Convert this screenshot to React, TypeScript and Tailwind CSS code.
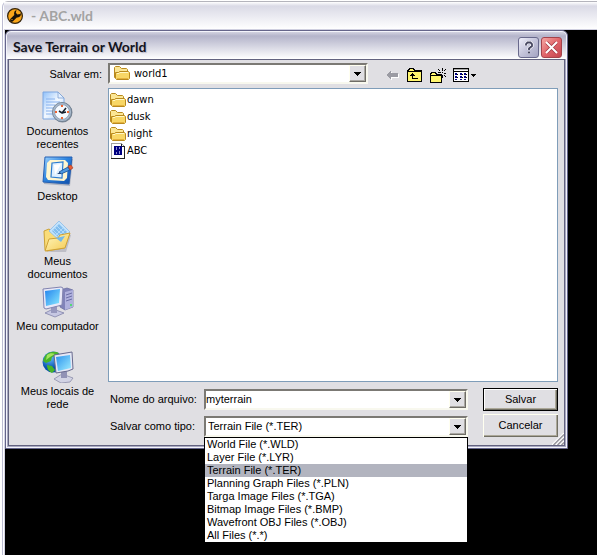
import { useState } from "react";
import type { ReactNode } from "react";

const FILE_TYPES = [
  "World File (*.WLD)",
  "Layer File (*.LYR)",
  "Terrain File (*.TER)",
  "Planning Graph Files (*.PLN)",
  "Targa Image Files (*.TGA)",
  "Bitmap Image Files (*.BMP)",
  "Wavefront OBJ Files (*.OBJ)",
  "All Files (*.*)",
];

const RecentIcon = () => (
  <svg viewBox="0 0 32 32" className="size-8">
    <defs>
      <linearGradient id="page" x1="0" y1="0" x2="1" y2="1">
        <stop offset="0" stopColor="#8fc0fa" />
        <stop offset=".5" stopColor="#f4f9ff" />
        <stop offset="1" stopColor="#a4caf6" />
      </linearGradient>
    </defs>
    <path d="M1 1h15l6 6v21H1z" fill="url(#page)" stroke="#7da6e0" />
    <path d="M16 1v6h6z" fill="#e4f0ff" stroke="#7c9fd2" strokeWidth=".8" />
    <path d="M4 8h9M4 11h14M4 14h9M4 17h7M4 20h6M4 23h7" stroke="#86b1ee" />
    <circle cx="20.5" cy="21.5" r="10" fill="#7e8795" />
    <circle cx="20" cy="21" r="9.6" fill="#a9b9cc" stroke="#6b7c8e" strokeWidth=".8" />
    <circle cx="20" cy="21" r="7.4" fill="#f5faff" stroke="#8394a9" strokeWidth=".8" />
    <path d="M20 14v2M20 26v2M13 21h2M25 21h2" stroke="#ee6432" strokeWidth="2" />
    <path d="M17 20l3 2 4-5M20 22l4-1" stroke="#16202d" strokeWidth="1.6" fill="none" />
  </svg>
);

const DesktopIcon = () => (
  <svg viewBox="0 0 32 32" className="size-8">
    <defs>
      <linearGradient id="desk" x1="0" y1="0" x2="1" y2="1">
        <stop offset="0" stopColor="#9dd3ff" />
        <stop offset=".45" stopColor="#2c83df" />
        <stop offset="1" stopColor="#0e4da9" />
      </linearGradient>
    </defs>
    <path d="M3 3l28 0-3 27-26-2z" fill="#7a88a0" opacity=".5" />
    <path d="M3 1h27l-3 27-26-2z" fill="url(#desk)" stroke="#245fb2" />
    <path d="M8 4h15l3 3-1 15-3 3-16-1-2-3 1-14z" fill="#fff6cf" />
    <path d="M10 7l11-1-1 16-11-1z" fill="#dcefff" stroke="#2a7bd0" strokeWidth="1.2" />
    <path d="M12 9l7-1-6 11z" fill="#fff" />
    <path d="M17 16l9-5 2 3-9 4z" fill="#4b98e1" stroke="#164c91" strokeWidth=".8" />
    <path d="M26 10l3-1 2 3-3 2z" fill="#e75c32" stroke="#a43720" strokeWidth=".6" />
    <path d="M15 18l3-2 1 2z" fill="#234677" />
  </svg>
);

const DocumentsIcon = () => (
  <svg viewBox="0 0 32 32" className="size-8">
    <defs>
      <linearGradient id="docs" x1="0" y1="0" x2="1" y2="1">
        <stop offset="0" stopColor="#fff9c4" />
        <stop offset="1" stopColor="#f5c94e" />
      </linearGradient>
    </defs>
    <path d="M5 31l19 0 5-17-2-1-6 14z" fill="#8d8d9a" opacity=".4" />
    <path d="M2 10l5-2 4 3 14 0 2 3-5 13-17 3-2-1z" fill="#f9dc78" stroke="#cba236" />
    <path d="M17 0l11 11-10 9L7 10z" fill="#c3e3fc" stroke="#8abbe8" strokeWidth=".8" />
    <path d="M17 3l8 8-7 7-8-8z" fill="#83beee" />
    <path d="M15 5l8 8M13 7l8 8M11 9l7 7M21 7l-8 8M23 9l-7 7" stroke="#c6e6ff" strokeWidth=".7" />
    <path d="M3 30l4-12 9-1 2-3 10-2-5 15z" fill="url(#docs)" stroke="#cfa236" />
    <path d="M14 17l9-2-4 6z" fill="#74b9e8" />
  </svg>
);

const ComputerIcon = () => (
  <svg viewBox="0 0 32 32" className="size-8">
    <defs>
      <linearGradient id="screen" x1="0" y1="0" x2="1" y2="1">
        <stop offset="0" stopColor="#2383ed" />
        <stop offset="1" stopColor="#89eaff" />
      </linearGradient>
    </defs>
    <path d="M18 4l7-2 6 2v17l-8 3-5-3z" fill="#8183b9" stroke="#696b9e" strokeWidth=".7" />
    <path d="M23 6l8-2v17l-8 3z" fill="#b0b1dd" />
    <path d="M24 9l6-2M24 12l6-2M24 15l6-2" stroke="#6c6ea7" />
    <path d="M28 19h2" stroke="#53dc72" strokeWidth="2" />
    <path d="M3 27l8-4 11 4-9 4z" fill="#c6c7e2" stroke="#8183aa" strokeWidth=".8" />
    <path d="M9 20h6v7H9z" fill="#9697bd" />
    <path d="M1 3l18-2 2 1-1 17-16 4-2-1z" fill="#e9e9f8" stroke="#8284b0" />
    <path d="M3 5l15-2-1 14-13 3z" fill="url(#screen)" />
  </svg>
);

const NetworkIcon = () => (
  <svg viewBox="0 0 32 32" className="size-8">
    <defs>
      <radialGradient id="globe" cx=".35" cy=".3">
        <stop offset="0" stopColor="#68bfff" />
        <stop offset="1" stopColor="#0751ad" />
      </radialGradient>
      <linearGradient id="net" x1="0" y1="0" x2="1" y2="1">
        <stop offset="0" stopColor="#2992ee" />
        <stop offset="1" stopColor="#a0edff" />
      </linearGradient>
    </defs>
    <circle cx="11" cy="11" r="10.5" fill="url(#globe)" />
    <path d="M3 5c4-5 10-5 14-3l-4 3-3 1-1 4-5 2-3-2zM5 14l5 1 3 4-3 3c-4-2-5-5-5-8z" fill="#47b529" />
    <path d="M5 4c3-2 5-2 8-1l-5 3-4 3z" fill="#a3e35f" />
    <path d="M12 28l8-5 11 4-3 4-9 1z" fill="#d2d3e4" stroke="#8b8da8" strokeWidth=".8" />
    <path d="M19 20h6v7h-6z" fill="#9192b5" />
    <path d="M12 4l18-3 1 17-5 2-12 2z" fill="#e5e7f5" stroke="#686a8e" />
    <path d="M14 6l14-2 1 13-13 3z" fill="url(#net)" />
  </svg>
);

const PLACES: { name: string; icon: ReactNode }[] = [
  { name: "Documentos recentes", icon: <RecentIcon /> },
  { name: "Desktop", icon: <DesktopIcon /> },
  { name: "Meus documentos", icon: <DocumentsIcon /> },
  { name: "Meu computador", icon: <ComputerIcon /> },
  { name: "Meus locais de rede", icon: <NetworkIcon /> },
];

const FolderIcon = () => (
  <svg viewBox="0 0 16 16" className="size-4 shrink-0">
    <path d="M.5 12.5v-10l1-1h4l2 2h5l1 1v8z" fill="#fbe694" stroke="#b98a1e" />
    <path d="M1.5 13.5v-6h3l1-1h9l1 1v6l-1 1h-12z" fill="#f8d766" stroke="#b98a1e" />
    <path d="M3 8.5h2l1-1h8" stroke="#fff7c4" fill="none" />
    <path d="M3 13.5h11" stroke="#e4b23e" />
  </svg>
);

const WorldFileIcon = () => (
  <svg viewBox="0 0 16 16" className="size-4 shrink-0" shapeRendering="crispEdges">
    <path d="M1.5.5h10l3 3v12h-13z" fill="#fff" stroke="#a0a0a0" />
    <path d="M11.5.5v3h3M14.5 3v12.5H1" fill="none" stroke="#222" />
    <path d="M4 3h8v9H4z" fill="#000080" />
    <path d="M6 4h1v3H6zM9 4h1v2H9zM6 9h1v2H6zM9 8h1v3H9z" fill="#8f8fd0" />
  </svg>
);

const WrenchIcon = () => (
  <svg viewBox="0 0 16 16" className="size-4 shrink-0">
    <circle cx="8" cy="8" r="7.4" fill="#f9a61a" stroke="#33230a" strokeWidth="1.2" />
    <path
      d="M9.5 2 8.800 4.800l1.600 1.700 2.700-.6.400-1.100c1.200 2.600-.7 5-3.700 4.600L6 13.200c-1.700 1.500-3.900-.6-2.500-2.400l3.800-3.900C6.600 4.300 7.500 2.700 9.500 2z"
      fill="#17120a"
    />
    <path d="M4.500 11h1v1h-1z" fill="#f9a61a" />
  </svg>
);

const ArrowBox = () => (
  <span className="flex h-full w-[17px] items-center justify-center border border-[#fffff0] border-r-[#6e6c66] border-b-[#6e6c66] bg-[#e0dfe3] shadow-[inset_-1px_-1px_0_#a9a7a2]">
    <svg viewBox="0 0 7 4" className="h-1 w-[7px]" shapeRendering="crispEdges">
      <path d="M0 0h7v1H6v1H5v1H4v1H3V3H2V2H1V1H0z" />
    </svg>
  </span>
);

const sunken =
  "relative h-[21px] border-2 border-t-[#7b7974] border-l-[#7b7974] border-r-[#f8f8ee] border-b-[#f8f8ee] bg-white";

const Toolbar = () => (
  <div className="ml-[18px] flex h-6 items-center gap-[7px]">
    <button aria-label="Voltar" className="w-[14px]">
      <svg viewBox="0 0 14 12" className="h-3 w-[14px]" shapeRendering="crispEdges">
        <path d="M6 2v3h7v4H6v3L1 7z" fill="#fff" />
        <path d="M0 6l5-5v3h7v4H5v3z" fill="#9b9ba3" />
      </svg>
    </button>
    <button aria-label="Um nível acima" className="w-4">
      <svg viewBox="0 0 16 14" className="h-[14px] w-4" shapeRendering="crispEdges">
        <path d="M.5 13.5v-11h1v-1h1v-1h4v1h1v1h7v11z" fill="#fff66e" stroke="#000" />
        <path d="M1 3.5h14" stroke="#000" />
        <path d="M5 5h1v1h1v1h1v1H6v2h5v1H5V8H3V7h1V6h1z" fill="#000" />
      </svg>
    </button>
    <button aria-label="Criar nova pasta" className="w-4">
      <svg viewBox="0 0 16 15" className="h-[15px] w-4" shapeRendering="crispEdges">
        <path d="M.5 14.5v-9h1v-1h4v1h1v1h5v8z" fill="#fff66e" stroke="#000" />
        <path d="M1 7.5h10" stroke="#000" />
        <path d="M12 0h1v3h-1zM12 7h1v3h-1zM8 1h1v1H8zM9 2h1v1H9zM15 1h1v1h-1zM14 2h1v1h-1zM8 4h3v1H8zM14 5h2v1h-2zM10 6h1v1h-1zM14 7h1v1h-1zM15 8h1v1h-1zM12 4h1v1h-1z" />
      </svg>
    </button>
    <button aria-label="Menu Exibir" className="flex w-6 items-center gap-[2px]">
      <svg viewBox="0 0 16 14" className="h-[14px] w-4" shapeRendering="crispEdges">
        <path d="M.5.5h15v13H.5z" fill="#fff" stroke="#000" />
        <path d="M1 1h14v1H1z" fill="#aaa" />
        <path d="M0 3.5h16" stroke="#000" />
        <path d="M2 5h2v2H2zM7 5h2v2H7zM11 5h2v2h-2zM2 8h2v2H2zM7 8h2v2H7zM11 8h2v2h-2zM2 11h2v1H2zM7 11h2v1H7zM11 11h2v1h-2z" fill="#000080" />
        <path d="M4 6h1v1H4zM9 6h1v1H9zM13 6h1v1h-1zM4 9h1v1H4zM9 9h1v1H9zM13 9h1v1h-1z" />
      </svg>
      <svg viewBox="0 0 5 3" className="h-[3px] w-[5px]" shapeRendering="crispEdges">
        <path d="M0 0h5v1H4v1H3v1H2V2H1V1H0z" />
      </svg>
    </button>
  </div>
);

const SaveDialog = () => {
  const [fileName, setFileName] = useState("myterrain");
  const [fileType, setFileType] = useState("Terrain File (*.TER)");

  return (
    <div
      role="dialog"
      aria-labelledby="dialog-title"
      className="mr-[29px] rounded-t-md border border-[#65658a] bg-[#f4f4fb] p-px"
    >
      <div className="flex h-[27px] items-center gap-[2px] rounded-t-[4px] bg-linear-to-b from-[#d2d2e0] via-[#b4b4ca] via-15% to-white pt-[3px] pr-1 pl-[6px]">
        <h1
          id="dialog-title"
          className="flex-1 font-['Lato',sans-serif] text-[14px] leading-4 font-bold text-[#14141e] [text-shadow:1px_1px_1px_#b8b8c8]"
        >
          Save Terrain or World
        </h1>
        <button
          aria-label="Ajuda"
          className="flex size-[21px] items-center justify-center rounded-[3px] border border-[#69698c] bg-linear-to-br from-[#f0f0fa] via-[#c4c4da] to-[#a4a4c2]"
        >
          <svg viewBox="0 0 10 13" className="h-[13px] w-[10px]">
            <path d="M2 4.5V3l1.500-1.500h3L8 3v2L5 7.500V9M4 11.500h2" fill="none" stroke="#fff" strokeWidth="3" />
            <path d="M2 4.5V3l1.500-1.500h3L8 3v2L5 7.500V9M4 11.500h2" fill="none" stroke="#45455f" strokeWidth="1.8" />
          </svg>
        </button>
        <button
          aria-label="Fechar"
          className="flex size-[21px] items-center justify-center rounded-[3px] border border-[#a5434b] bg-linear-to-br from-[#f3a6a4] via-[#e0656a] to-[#c4434e]"
        >
          <svg viewBox="0 0 13 13" className="size-[13px]">
            <path d="M1.500 1.500l10 10M11.500 1.500l-10 10" stroke="#a03a46" strokeWidth="3.4" />
            <path d="M1 1l11 11M12 1L1 12" stroke="#fff" strokeWidth="2" />
          </svg>
        </button>
      </div>

      <div className="border border-t-0 border-[#a9a9c2]">
        <div className="relative border border-[#62627f] bg-[#e0dfe3]">
          <div className="grid grid-cols-[99px_1fr] pr-[6px]">
            <label htmlFor="folder" className="pt-2 pr-[6px] text-right">
              Salvar em:
            </label>
            <div className="flex h-7 pt-[3px]">
              <div className={`${sunken} w-[260px]`}>
                <select
                  id="folder"
                  className="h-full w-full appearance-none pl-6 font-['DejaVu_Sans_Condensed',sans-serif] outline-none"
                >
                  <option>world1</option>
                </select>
                <span className="pointer-events-none absolute top-0 left-1">
                  <FolderIcon />
                </span>
                <span className="pointer-events-none absolute inset-y-0 right-0">
                  <ArrowBox />
                </span>
              </div>
              <Toolbar />
            </div>

            <nav className="row-span-2 flex flex-col pt-px pr-[2px]">
              {PLACES.map((place) => (
                <button
                  key={place.name}
                  className="flex h-[65px] flex-col items-center gap-[2px] px-1 pt-[2px] text-center"
                >
                  {place.icon}
                  <span className="max-w-[84px]">{place.name}</span>
                </button>
              ))}
            </nav>

            <ul className="min-h-[294px] border border-[#7f9db9] bg-white px-px pt-[2px] font-['DejaVu_Sans_Condensed',sans-serif]">
              {["dawn", "dusk", "night"].map((name) => (
                <li key={name} className="flex h-[17px] items-center gap-px">
                  <FolderIcon />
                  {name}
                </li>
              ))}
              <li className="flex h-[17px] items-center gap-px">
                <WorldFileIcon />
                ABC
              </li>
            </ul>

            <div className="flex gap-[15px] pb-2">
              <div className="flex flex-1 flex-col gap-[6px] pt-[7px]">
                <div className="flex items-center">
                  <label htmlFor="file-name" className="w-24 pl-[2px]">
                    Nome do arquivo:
                  </label>
                  <div className={`${sunken} flex flex-1`}>
                    <input
                      id="file-name"
                      value={fileName}
                      onChange={(e) => setFileName(e.target.value)}
                      className="min-w-0 flex-1 outline-none"
                    />
                    <button aria-label="Nomes recentes">
                      <ArrowBox />
                    </button>
                  </div>
                </div>
                <div className="flex items-center">
                  <label htmlFor="file-type" className="w-24 pl-[2px]">
                    Salvar como tipo:
                  </label>
                  <div className={`${sunken} flex-1`}>
                    <select
                      id="file-type"
                      value={fileType}
                      onChange={(e) => setFileType(e.target.value)}
                      className="h-full w-full appearance-none pl-[2px] outline-none"
                    >
                      {FILE_TYPES.map((type) => (
                        <option key={type}>{type}</option>
                      ))}
                    </select>
                    <span className="pointer-events-none absolute inset-y-0 right-0">
                      <ArrowBox />
                    </span>
                    <ul
                      role="listbox"
                      aria-label="Salvar como tipo"
                      className="absolute -inset-x-[2px] top-[19px] z-10 border border-b-0 border-black bg-white"
                    >
                      {FILE_TYPES.map((type) => (
                        <li
                          key={type}
                          role="option"
                          aria-selected={type === fileType}
                          onClick={() => setFileType(type)}
                          className={`pl-[2px] ${type === fileType ? "bg-[#b2b4bf]" : ""}`}
                        >
                          {type}
                        </li>
                      ))}
                    </ul>
                  </div>
                </div>
              </div>
              <div className="flex w-[75px] flex-col gap-[3px] pt-[6px]">
                <button className="h-[23px] border border-black bg-[#e0dfe3] shadow-[inset_1px_1px_0_#fff,inset_-1px_-1px_0_#716f64,inset_-2px_-2px_0_#aca899]">
                  Salvar
                </button>
                <button className="h-[23px] bg-[#e0dfe3] shadow-[inset_1px_1px_0_#fffff0,inset_-1px_-1px_0_#716f64,inset_-2px_-2px_0_#aca899]">
                  Cancelar
                </button>
              </div>
            </div>
          </div>
          <svg viewBox="0 0 12 12" className="absolute right-0 bottom-0 size-3">
            <path d="M0 12L12 0M4 12l8-8M8 12l4-4" stroke="#fff" strokeWidth="1.4" />
            <path d="M1.500 12L12 1.500M5.500 12L12 5.500M9.500 12L12 9.500" stroke="#96949c" strokeWidth="1.4" />
          </svg>
        </div>
      </div>
    </div>
  );
};

export default function App() {
  return (
    <div className="flex min-h-screen flex-col bg-white pt-px pl-[2px] font-['Liberation_Sans',sans-serif] text-[11px] leading-[13px] text-black">
      <div className="flex flex-1 flex-col rounded-tl-md border-t border-l border-t-[#b4b4bc] border-l-[#bcbcd2] pl-px">
        <header className="flex h-7 items-center gap-2 border-b border-[#d0d0e0] bg-linear-to-b from-white via-[#dadae6] via-15% to-white pl-[3px]">
          <WrenchIcon />
          <span className="font-['Lato',sans-serif] text-[14px] leading-4 font-bold text-[#a3a3a3]">
            - ABC.wld
          </span>
        </header>
        <main className="flex-1 border-l border-[#d4d4e4] bg-black">
          <SaveDialog />
        </main>
      </div>
    </div>
  );
}
